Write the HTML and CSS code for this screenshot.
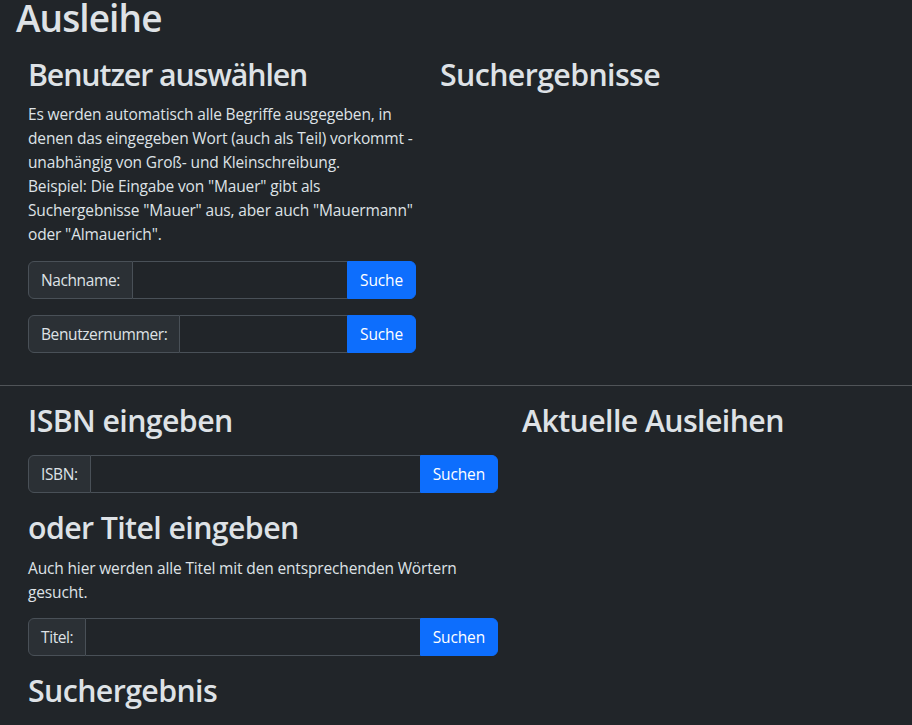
FILE: index.html
```html
<!DOCTYPE html>
<html lang="de">
<head>
<meta charset="utf-8">
<title>Ausleihe</title>
<link rel="stylesheet" href="styles.css">
</head>
<body>
<main class="page">
  <h1 class="page-title">Ausleihe</h1>
  <div class="row row-five">
    <section class="col">
      <h2 class="heading heading-narrow">Benutzer auswählen</h2>
      <p class="text text-intro">Es werden automatisch alle Begriffe ausgegeben, in denen das eingegeben Wort (auch als Teil) vorkommt - unabhängig von Groß- und Kleinschreibung.<br>Beispiel: Die Eingabe von "Mauer" gibt als Suchergebnisse "Mauer" aus, aber auch "Mauermann" oder "Almauerich".</p>
      <form class="input-group">
        <span class="ig-text">Nachname:</span>
        <input class="ig-input" type="text">
        <button class="btn" type="button">Suche</button>
      </form>
      <form class="input-group">
        <span class="ig-text">Benutzernummer:</span>
        <input class="ig-input" type="text">
        <button class="btn" type="button">Suche</button>
      </form>
    </section>
    <section class="col">
      <h2 class="heading">Suchergebnisse</h2>
    </section>
  </div>
  <hr class="divider">
  <div class="row row-six">
    <section class="col">
      <h2 class="heading heading-isbn">ISBN eingeben</h2>
      <form class="input-group">
        <span class="ig-text">ISBN:</span>
        <input class="ig-input" type="text">
        <button class="btn" type="button">Suchen</button>
      </form>
      <h2 class="heading">oder Titel eingeben</h2>
      <p class="text text-tight">Auch hier werden alle Titel mit den entsprechenden Wörtern gesucht.</p>
      <form class="input-group">
        <span class="ig-text">Titel:</span>
        <input class="ig-input" type="text">
        <button class="btn" type="button">Suchen</button>
      </form>
      <h2 class="heading">Suchergebnis</h2>
    </section>
    <section class="col">
      <h2 class="heading">Aktuelle Ausleihen</h2>
    </section>
  </div>
</main>
</body>
</html>
```
FILE: styles.css
```css
* { box-sizing: border-box; }
html, body { margin: 0; padding: 0; }
body {
  background: #212529;
  color: #dee2e6;
  font-family: "Open Sans", "Noto Sans", sans-serif;
  font-size: 15.5px;
  letter-spacing: -0.15px;
  line-height: 24px;
}
.page { padding: 0; }
.page-title {
  margin: 0 0 20px 16px;
  font-size: 37px;
  font-weight: 600;
  line-height: 36px;
  letter-spacing: -0.9px;
}
.row { display: grid; padding-left: 16px; }
.row-five { grid-template-columns: 412px minmax(0, 1fr); }
.row-six { grid-template-columns: 494px minmax(0, 1fr); }
.col { padding: 0 12px; min-width: 0; }
.heading {
  margin: 0 0 8px;
  font-size: 30.3px;
  font-weight: 600;
  line-height: 38.4px;
  letter-spacing: -0.6px;
}
.heading-narrow { letter-spacing: -1.1px; }
.heading-isbn { margin-bottom: 14.6px; }
.text { margin: 0 0 16px; }
.text-intro { margin-bottom: 15px; }
.text-tight { margin-bottom: 14px; }
.input-group {
  display: flex;
  height: 38px;
  margin: 0 0 16px;
}
.ig-text {
  display: flex;
  align-items: center;
  padding: 0 12px;
  background: #2b3035;
  border: 1px solid #495057;
  border-radius: 6px 0 0 6px;
  white-space: nowrap;
  color: #dee2e6;
  letter-spacing: -0.4px;
}
.ig-input {
  flex: 1 1 auto;
  min-width: 0;
  background: #212529;
  border: 1px solid #495057;
  border-left: 0;
  border-right: 0;
  margin: 0;
  padding: 0 12px;
  color: #dee2e6;
  font: inherit;
}
.btn {
  background: #0d6efd;
  color: #fff;
  border: 1px solid #0d6efd;
  border-radius: 0 6px 6px 0;
  padding: 0 12px;
  margin: 0;
  font: inherit;
  letter-spacing: inherit;
}
.divider {
  margin: 16px 0;
  border: 0;
  border-top: 1px solid #505458;
  height: 0;
}
```
